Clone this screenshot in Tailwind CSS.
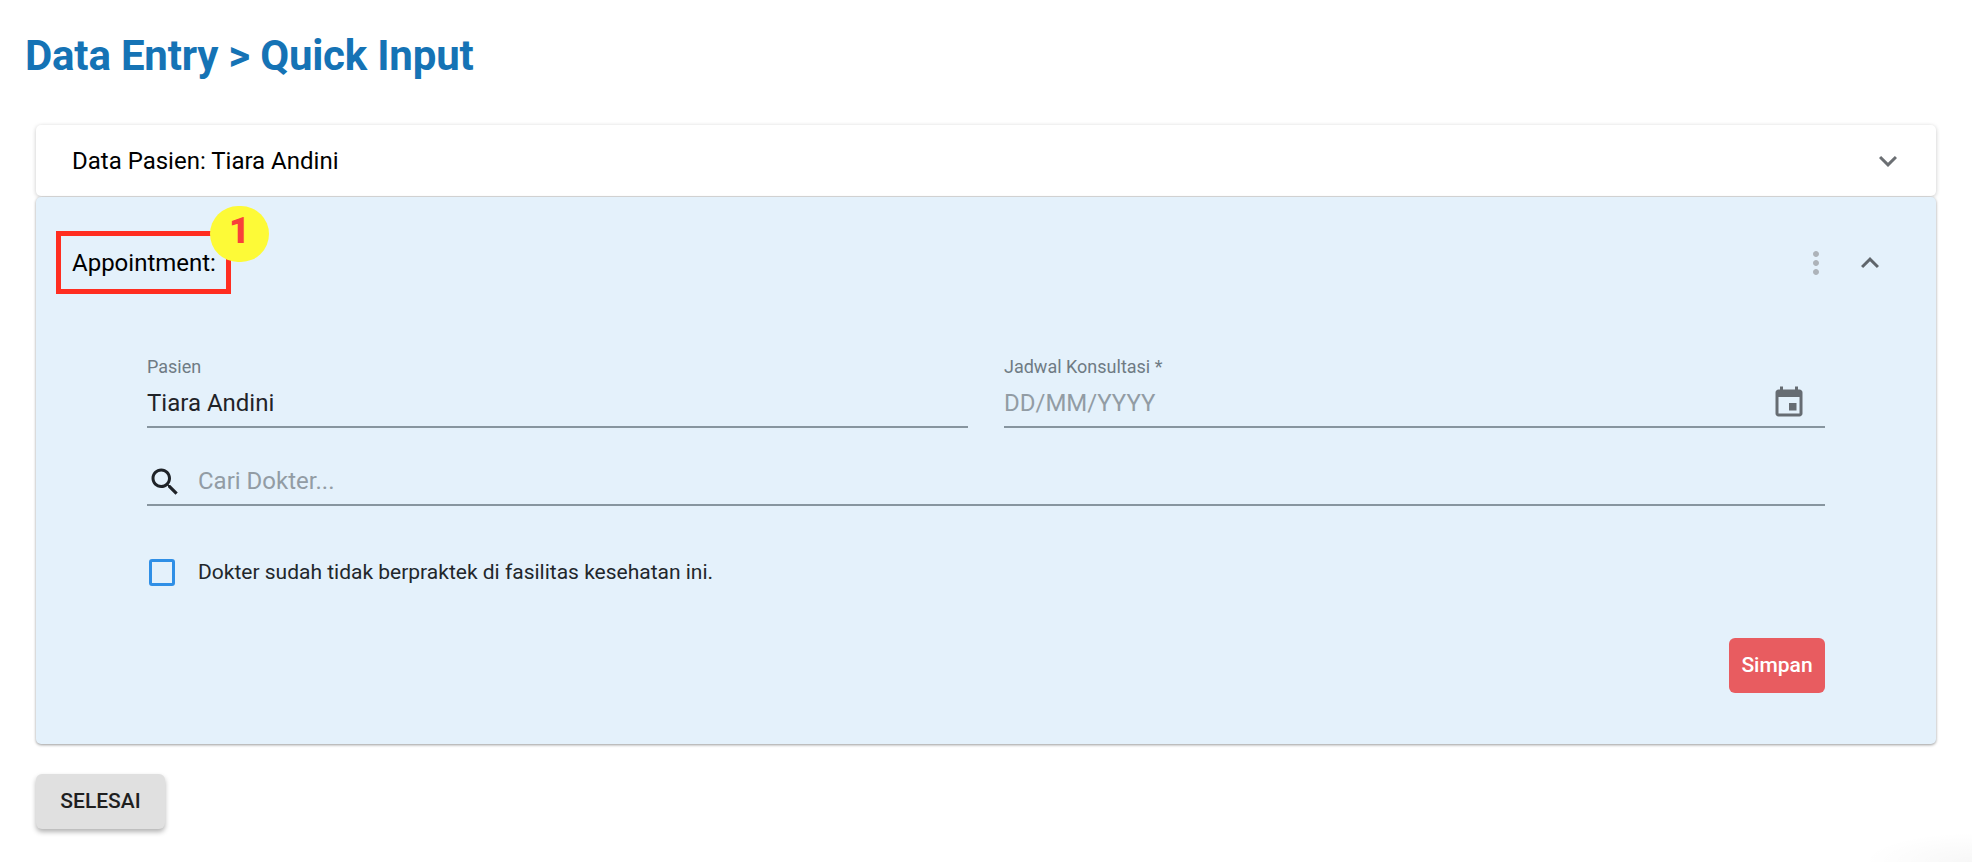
<!DOCTYPE html>
<html lang="en">
<head>
    <meta charset="UTF-8">
    <title>Data Entry - Quick Input</title>
    <script src="https://cdn.jsdelivr.net/npm/@tailwindcss/browser@4"></script>
</head>
<body class="relative bg-white h-[862px] overflow-hidden font-['Roboto',sans-serif] text-[24px]">
    <h1 class="h-[125px] pl-[25px] pt-[31px] text-[42px] leading-[50px] font-bold tracking-[-0.2px] text-[#1573b5]">Data Entry &gt; Quick Input</h1>

    <main class="px-[36px]">
        <!-- patient panel -->
        <div class="h-[71px] bg-white rounded-[5px] shadow-[0_1px_4px_rgba(0,0,0,0.22)] flex items-center justify-between pl-[36px] pr-[30px]">
            <span class="text-black">Data Pasien: Tiara Andini</span>
            <svg class="w-[36px] h-[36px] text-[#6b6f73]" viewBox="0 0 24 24" fill="currentColor"><path d="M16.59 8.59 12 13.17 7.41 8.59 6 10l6 6 6-6z"/></svg>
        </div>

        <!-- appointment panel -->
        <div class="relative mt-[1px] h-[547px] bg-[#e4f1fb] rounded-[5px] shadow-[0_1px_3px_rgba(0,0,0,0.4)]">
            <div class="h-[132px] flex items-center justify-between pl-[36px] pr-[48px]">
                <span class="text-black">Appointment:</span>
                <div class="flex items-center gap-[18px]">
                    <svg class="w-[36px] h-[36px] text-[#adb3b9]" viewBox="0 0 24 24" fill="currentColor"><path d="M12 8c1.1 0 2-.9 2-2s-.9-2-2-2-2 .9-2 2 .9 2 2 2zm0 2c-1.1 0-2 .9-2 2s.9 2 2 2 2-.9 2-2-.9-2-2-2zm0 6c-1.1 0-2 .9-2 2s.9 2 2 2 2-.9 2-2-.9-2-2-2z"/></svg>
                    <svg class="w-[36px] h-[36px] text-[#5f656b]" viewBox="0 0 24 24" fill="currentColor"><path d="m12 8-6 6 1.41 1.41L12 10.83l4.59 4.58L18 14z"/></svg>
                </div>
            </div>

            <div class="px-[111px]">
                <div class="grid grid-cols-2 gap-[36px]">
                    <div class="h-[99px] border-b-2 border-[#87959f]">
                        <label class="block text-[18px] leading-[20px] pt-[28px] text-[#6f7b84]">Pasien</label>
                        <div class="mt-[11px] leading-[30px] text-[#1f2328]">Tiara Andini</div>
                    </div>
                    <div class="h-[99px] border-b-2 border-[#87959f] flex justify-between">
                        <div>
                            <label class="block text-[18px] leading-[20px] pt-[28px] text-[#6f7b84]">Jadwal Konsultasi *</label>
                            <div class="mt-[11px] leading-[30px] text-[#929ca4]">DD/MM/YYYY</div>
                        </div>
                        <svg class="w-[36px] h-[36px] mt-[56px] mr-[18px] text-[#666c72]" viewBox="0 0 24 24" fill="currentColor"><path d="M17 12h-5v5h5v-5zM16 1v2H8V1H6v2H5c-1.11 0-1.99.9-1.99 2L3 19c0 1.1.89 2 2 2h14c1.1 0 2-.9 2-2V5c0-1.1-.9-2-2-2h-1V1h-2zm3 18H5V8h14v11z"/></svg>
                    </div>
                </div>

                <div class="h-[78px] border-b-2 border-[#87959f] flex items-end pb-[4px]">
                    <svg class="w-[36px] h-[36px] text-[#1f2328]" viewBox="0 0 24 24" fill="currentColor"><path d="M15.5 14h-.79l-.28-.27C15.41 12.59 16 11.11 16 9.5 16 5.91 13.09 3 9.5 3S3 5.91 3 9.5 5.91 16 9.5 16c1.61 0 3.09-.59 4.23-1.57l.27.28v.79l5 4.99L20.49 19l-4.99-5zm-6 0C7.01 14 5 11.99 5 9.5S7.01 5 9.5 5 14 7.01 14 9.5 11.99 14 9.5 14z"/></svg>
                    <span class="ml-[15px] mb-[1px] leading-[36px] text-[#929ca4]">Cari Dokter...</span>
                </div>

                <div class="mt-[52px] flex items-center h-[28px]">
                    <div class="ml-[2px] w-[26px] h-[27px] border-[3px] border-[#2f8fe6] rounded-[3px]"></div>
                    <span class="ml-[23px] mt-[1px] text-[21px] text-[#22272b]">Dokter sudah tidak berpraktek di fasilitas kesehatan ini.</span>
                </div>

                <div class="mt-[52px] flex justify-end">
                    <button class="w-[96px] h-[55px] bg-[#e85c60] rounded-[6px] text-white text-[21px] font-medium">Simpan</button>
                </div>
            </div>

            <!-- annotation -->
            <div class="absolute left-[20px] top-[34px] w-[175px] h-[63px] border-[5px] border-[#ff2d20]"></div>
            <div class="absolute left-[174px] top-[9px] w-[59px] h-[56px] pb-[7px] rounded-full bg-[#fdfa37] flex items-center justify-center text-[#f9403a] text-[36px] font-black">1</div>
        </div>

        <button class="mt-[30px] block w-[129px] h-[55px] bg-[#e0e0e0] rounded-[6px] shadow-[0_3px_5px_rgba(0,0,0,0.3)] text-[#1f1f1f] text-[21px] font-medium">SELESAI</button>
    </main>

    <div class="absolute right-0 bottom-0 w-[110px] h-[30px] bg-[radial-gradient(ellipse_at_bottom_right,rgba(0,0,0,0.03),rgba(0,0,0,0)_70%)]"></div>
</body>
</html>
